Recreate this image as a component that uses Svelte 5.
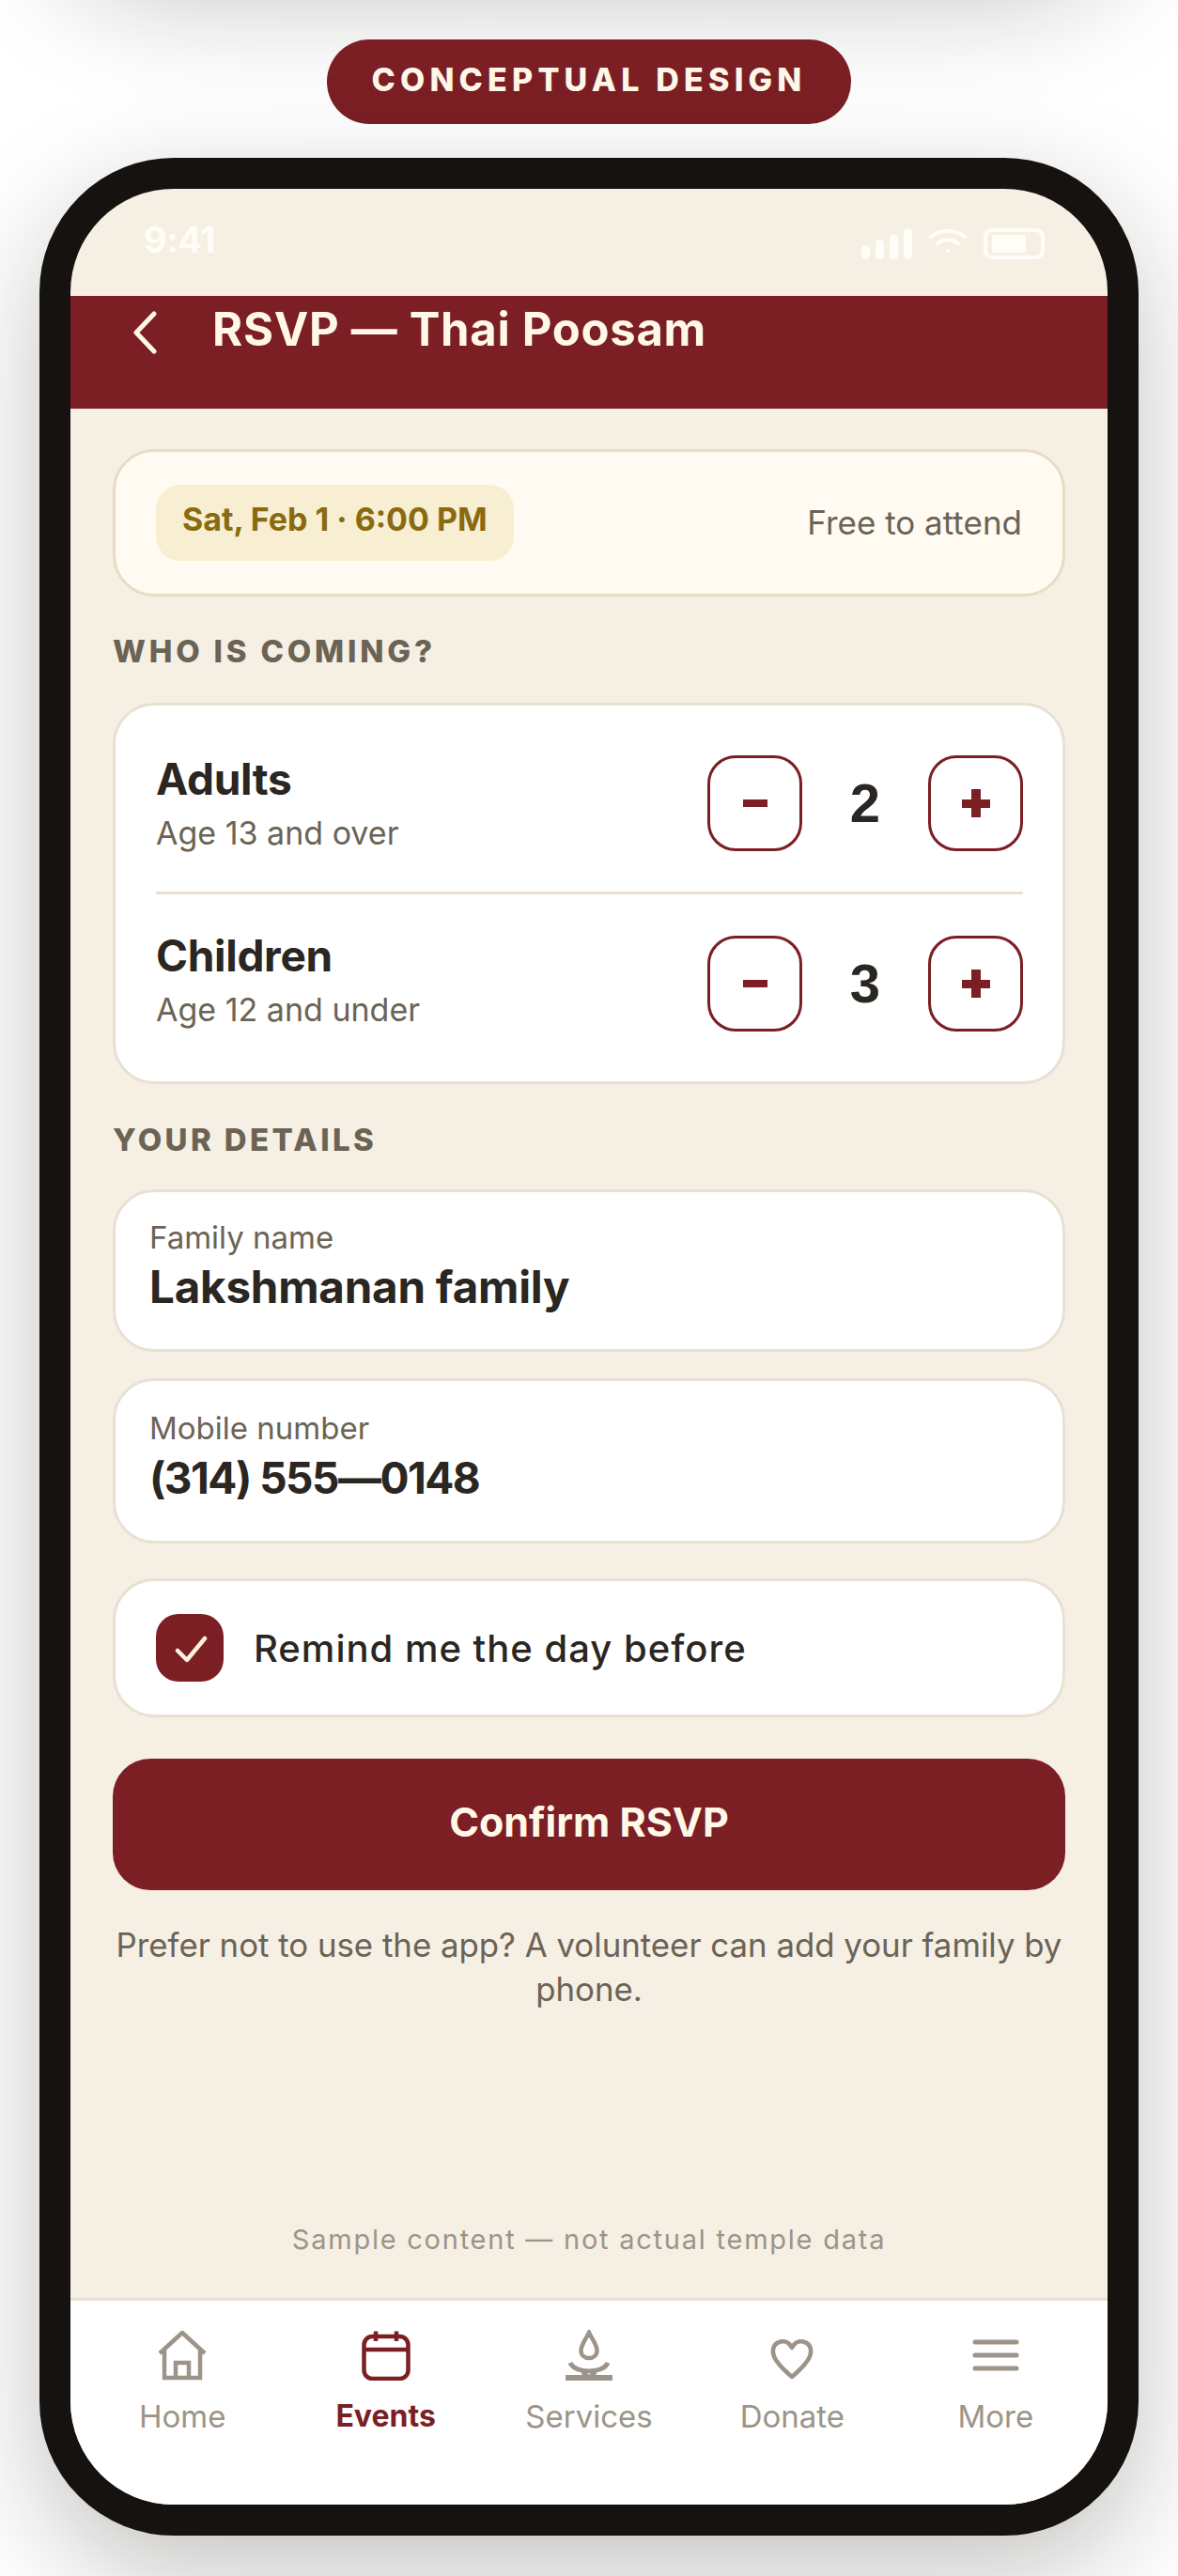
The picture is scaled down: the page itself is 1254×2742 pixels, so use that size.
<script>
  let adults = $state(2);
  let children = $state(3);

  const tabs = [
    { label: 'Home', key: 'home' },
    { label: 'Events', key: 'events' },
    { label: 'Services', key: 'services' },
    { label: 'Donate', key: 'donate' },
    { label: 'More', key: 'more' }
  ];
</script>

<div class="page">
  <div class="prev-phone"></div>
  <div class="pill">CONCEPTUAL DESIGN</div>

  <div class="phone">
    <div class="screen">
      <div class="status">
        <span class="time">9:41</span>
        <div class="status-icons">
          <div class="bars"><i></i><i></i><i></i><i></i></div>
          <svg class="wifi" width="40" height="28" viewBox="0 0 40 28" fill="none" stroke="#fffdf8" stroke-width="4" stroke-linecap="round">
            <path d="M2 9 C12 1 28 1 38 9" />
            <path d="M9 16 C15 11 25 11 31 16" />
            <circle cx="20" cy="24" r="2" fill="#fffdf8" stroke="none" />
          </svg>
          <div class="battery"><i></i></div>
        </div>
      </div>

      <header class="bar">
        <svg class="back" width="28" height="46" viewBox="0 0 28 46" fill="none" stroke="#fff7e8" stroke-width="5" stroke-linecap="round" stroke-linejoin="round">
          <path d="M24 3 L5 23 L24 43" />
        </svg>
        <h1>RSVP — Thai Poosam</h1>
      </header>

      <main>
        <div class="date-card">
          <span class="date">Sat, Feb 1 · 6:00 PM</span>
          <span class="free">Free to attend</span>
        </div>

        <div class="section first">WHO IS COMING?</div>
        <div class="card counters">
          <div class="row">
            <div>
              <div class="name">Adults</div>
              <div class="sub">Age 13 and over</div>
            </div>
            <div class="stepper">
              <button class="step" aria-label="Fewer adults" onclick={() => adults--}><span class="minus"></span></button>
              <span class="count">{adults}</span>
              <button class="step" aria-label="More adults" onclick={() => adults++}><span class="plus"></span></button>
            </div>
          </div>
          <div class="row divided">
            <div class="who">
              <div class="name">Children</div>
              <div class="sub">Age 12 and under</div>
            </div>
            <div class="stepper">
              <button class="step" aria-label="Fewer children" onclick={() => children--}><span class="minus"></span></button>
              <span class="count">{children}</span>
              <button class="step" aria-label="More children" onclick={() => children++}><span class="plus"></span></button>
            </div>
          </div>
        </div>

        <div class="section second">YOUR DETAILS</div>
        <div class="card field">
          <div class="field-label">Family name</div>
          <div class="field-value">Lakshmanan family</div>
        </div>
        <div class="card field phone-field">
          <div class="field-label">Mobile number</div>
          <div class="field-value">(314) 555—0148</div>
        </div>

        <div class="card remind">
          <span class="check">
            <svg width="36" height="32" viewBox="0 0 36 32" fill="none" stroke="#fff3dd" stroke-width="4.5" stroke-linecap="round" stroke-linejoin="round">
              <path d="M3 17 L13 27 L32 4" />
            </svg>
          </span>
          <span class="remind-text">Remind me the day before</span>
        </div>

        <button class="confirm">Confirm RSVP</button>
        <p class="note">Prefer not to use the app? A volunteer can add your family by phone.</p>
        <p class="sample">Sample content — not actual temple data</p>
      </main>

      <nav class="tabs">
        {#each tabs as tab}
          <div class="tab" class:active={tab.key === 'events'}>
            {#if tab.key === 'home'}
              <svg width="54" height="54" viewBox="0 0 54 54" fill="none" stroke="currentColor" stroke-width="4.5">
                <path d="M3 25 L27 3 L51 25" stroke-linejoin="round" />
                <path d="M8 21 V51 H46 V21" />
                <path d="M20 51 V35 H34 V51" />
              </svg>
            {:else if tab.key === 'events'}
              <svg width="54" height="54" viewBox="0 0 54 54" fill="none" stroke="currentColor" stroke-width="4.5">
                <rect x="3.5" y="7" width="47" height="45" rx="9" />
                <path d="M3.5 21 H50.5" />
                <path d="M16 1.5 V12 M38 1.5 V12" />
              </svg>
            {:else if tab.key === 'services'}
              <svg width="54" height="54" viewBox="0 0 54 54" fill="none" stroke="currentColor" stroke-width="4.5">
                <path d="M27 3 C23 11 18.500 16 18.500 22 C18.500 27 22 30 27 30 C32 30 35.500 27 35.500 22 C35.500 16 31 11 27 3 Z" />
                <path d="M7 35 C12 47 42 47 47 35" stroke-width="5" />
                <path d="M2 51 H52" stroke-width="6" />
                <path d="M20 45 L26 50 M34 45 L28 50" />
              </svg>
            {:else if tab.key === 'donate'}
              <svg width="54" height="54" viewBox="0 0 54 54" fill="none" stroke="currentColor" stroke-width="4.5" stroke-linejoin="round">
                <path d="M27 19 C24 13 19 11.500 15 12.500 C8 14 5.500 20 7.500 27 C10 35 20 44 27 50 C34 44 44 35 46.500 27 C48.500 20 46 14 39 12.500 C35 11.500 30 13 27 19 Z" />
              </svg>
            {:else}
              <svg width="54" height="54" viewBox="0 0 54 54" fill="none" stroke="currentColor" stroke-width="5" stroke-linecap="round">
                <path d="M5 13 H49 M5 27 H49 M5 41 H49" />
              </svg>
            {/if}
            <span>{tab.label}</span>
          </div>
        {/each}
      </nav>
    </div>
  </div>
</div>

<style>
  :global(body) {
    margin: 0;
    background: #fff;
  }

  .page {
    position: relative;
    height: 2742px;
    overflow: hidden;
    padding-top: 42px;
    box-sizing: border-box;
    font-family: Inter, "Liberation Sans", sans-serif;
    color: #2a2622;
  }

  /* shadow of the phone above this one on the long page */
  .prev-phone {
    position: absolute;
    left: 42px;
    width: 1170px;
    top: -300px;
    height: 258px;
    border-radius: 0 0 143px 143px;
    background: #15120f;
    box-shadow: 0 40px 120px rgba(20, 15, 10, 0.25);
  }

  .pill {
    position: relative;
    width: 558px;
    height: 90px;
    margin: 0 auto 36px;
    border-radius: 45px;
    background: #7b1f24;
    color: #fff7e8;
    font-size: 34px;
    font-weight: 800;
    letter-spacing: 5.2px;
    display: flex;
    align-items: center;
    justify-content: center;
    padding-bottom: 6px;
    box-sizing: border-box;
  }

  .phone {
    width: 1170px;
    height: 2531px;
    margin: 0 auto;
    border: 33px solid #15120f;
    border-radius: 143px;
    box-sizing: border-box;
    background: #15120f;
    box-shadow: 0 40px 120px rgba(20, 15, 10, 0.25);
    position: relative;
  }

  .screen {
    height: 100%;
    border-radius: 110px;
    overflow: hidden;
    background: #f6efe4;
    display: flex;
    flex-direction: column;
  }

  .status {
    height: 114px;
    flex: none;
    display: flex;
    justify-content: space-between;
    padding: 32px 67px 0 78px;
    box-sizing: border-box;
  }

  .time {
    color: #fffdf8;
    font-size: 38px;
    font-weight: 700;
    letter-spacing: -0.5px;
    line-height: 44px;
  }

  .status-icons {
    display: flex;
    align-items: flex-start;
    gap: 18px;
    padding-top: 10px;
  }

  .bars {
    display: flex;
    align-items: flex-end;
    gap: 6px;
    height: 33px;
  }

  .bars i {
    display: block;
    width: 9px;
    border-radius: 5px;
    background: #fffdf8;
  }

  .bars i:nth-child(1) { height: 15px; }
  .bars i:nth-child(2) { height: 21px; }
  .bars i:nth-child(3) { height: 27px; }
  .bars i:nth-child(4) { height: 33px; }

  .battery {
    width: 65px;
    height: 33px;
    border: 4px solid #fffdf8;
    border-radius: 9px;
    box-sizing: border-box;
    padding: 3px 16px 3px 5px;
  }

  .battery i {
    display: block;
    height: 100%;
    border-radius: 3px;
    background: #fffdf8;
  }

  .bar {
    height: 120px;
    flex: none;
    background: #7b1f24;
    display: flex;
    align-items: flex-start;
    padding: 14px 0 0 65px;
    box-sizing: border-box;
    gap: 58px;
  }

  .back {
    margin-top: 2px;
    flex: none;
  }

  h1 {
    margin: 0;
    color: #fff7e8;
    font-size: 49px;
    font-weight: 700;
    line-height: 44px;
    letter-spacing: 0.7px;
  }

  main {
    flex: 1;
    padding: 43px 45px 0;
    display: flex;
    flex-direction: column;
  }

  .date-card {
    height: 157px;
    flex: none;
    border: 3px solid #e8dcc4;
    border-radius: 44px;
    background: #fffbf2;
    display: flex;
    align-items: center;
    justify-content: space-between;
    padding: 0 43px;
    box-sizing: border-box;
  }

  .date {
    height: 81px;
    display: flex;
    align-items: center;
    padding: 0 28px 9px;
    border-radius: 26px;
    background: #f8eed2;
    color: #8a6a10;
    font-size: 34px;
    font-weight: 700;
    box-sizing: border-box;
  }

  .free {
    color: #6b6355;
    font-size: 35px;
    padding-bottom: 2px;
  }

  .section {
    color: #6b6355;
    font-size: 33px;
    font-weight: 800;
    letter-spacing: 3.8px;
    line-height: 40px;
  }

  .section.first { margin: 38px 0 35px; }
  .section.second { margin: 39px 0 33px; letter-spacing: 3.4px; }

  .card {
    flex: none;
    border: 3px solid #e8e0d3;
    background: #fff;
    border-radius: 44px;
    box-sizing: border-box;
  }

  .counters {
    height: 406px;
    padding: 8px 42px 8px 43px;
  }

  .row {
    height: 190px;
    padding-top: 2px;
    display: flex;
    align-items: center;
    justify-content: space-between;
    box-sizing: border-box;
  }

  .row.divided {
    height: 193px;
    padding-top: 0;
    border-top: 3px solid #e8e0d3;
  }

  .who {
    margin-bottom: 8px;
  }

  .name {
    font-size: 46px;
    font-weight: 700;
    line-height: 56px;
    letter-spacing: -0.3px;
  }

  .sub {
    margin-top: 8px;
    color: #6b6355;
    font-size: 34px;
    line-height: 44px;
  }

  .stepper {
    display: flex;
    align-items: center;
  }

  .step {
    width: 101px;
    height: 102px;
    border: 3px solid #7b1f24;
    border-radius: 30px;
    background: #fff;
    padding: 0;
    display: flex;
    align-items: center;
    justify-content: center;
  }

  .minus {
    display: block;
    width: 26px;
    height: 8px;
    background: #7b1f24;
  }

  .plus {
    display: block;
    position: relative;
    width: 30px;
    height: 30px;
  }

  .plus::before,
  .plus::after {
    content: '';
    position: absolute;
    background: #7b1f24;
  }

  .plus::before {
    left: 0;
    right: 0;
    top: 11px;
    height: 9px;
  }

  .plus::after {
    top: 0;
    bottom: 0;
    left: 10px;
    width: 10px;
  }

  .count {
    width: 134px;
    text-align: center;
    font-family: "Liberation Sans", Arial, sans-serif;
    font-size: 58px;
    font-weight: 700;
    line-height: 1;
  }

  .field {
    height: 173px;
    padding: 27px 36px 0;
  }

  .phone-field {
    height: 176px;
    margin-top: 28px;
    padding-top: 29px;
  }

  .field-label {
    color: #6b6355;
    font-size: 33px;
    line-height: 42px;
  }

  .field-value {
    font-size: 47.500px;
    font-weight: 700;
    line-height: 56px;
    letter-spacing: -0.2px;
    margin-top: 4px;
  }

  .phone-field .field-value {
    font-size: 46px;
    letter-spacing: -1.5px;
  }

  .remind {
    height: 148px;
    margin-top: 37px;
    display: flex;
    align-items: center;
    gap: 32px;
    padding: 0 43px;
  }

  .check {
    width: 72px;
    height: 72px;
    border-radius: 24px;
    background: #7b1f24;
    display: flex;
    align-items: center;
    justify-content: center;
  }

  .check svg {
    margin: 3px 0 0 3px;
  }

  .remind-text {
    font-size: 40px;
    font-weight: 500;
    letter-spacing: 1px;
  }

  .confirm {
    height: 140px;
    flex: none;
    margin-top: 44px;
    border: 0;
    border-radius: 40px;
    background: #7b1f24;
    color: #fff7e8;
    font-family: inherit;
    font-size: 43px;
    font-weight: 700;
    padding: 0 0 6px;
  }

  .note {
    margin: 35px 0 0;
    text-align: center;
    color: #6b6355;
    font-size: 34.800px;
    line-height: 47px;
  }

  .sample {
    margin: auto 0 0;
    padding-bottom: 42px;
    text-align: center;
    color: #9c9488;
    font-size: 29px;
    line-height: 40px;
    letter-spacing: 1.760px;
  }

  .tabs {
    height: 220px;
    flex: none;
    border-top: 3px solid #e8e0d3;
    background: #fff;
    display: grid;
    grid-template-columns: repeat(5, 1fr);
    padding: 0 11px;
    box-sizing: border-box;
  }

  .tab {
    display: flex;
    flex-direction: column;
    align-items: center;
    padding-top: 31px;
    color: #9c9488;
    font-size: 33px;
    line-height: 44px;
  }

  .tab svg {
    margin-bottom: 16px;
  }

  .tab.active {
    color: #7b1f24;
    font-weight: 700;
    font-size: 32px;
  }
</style>
